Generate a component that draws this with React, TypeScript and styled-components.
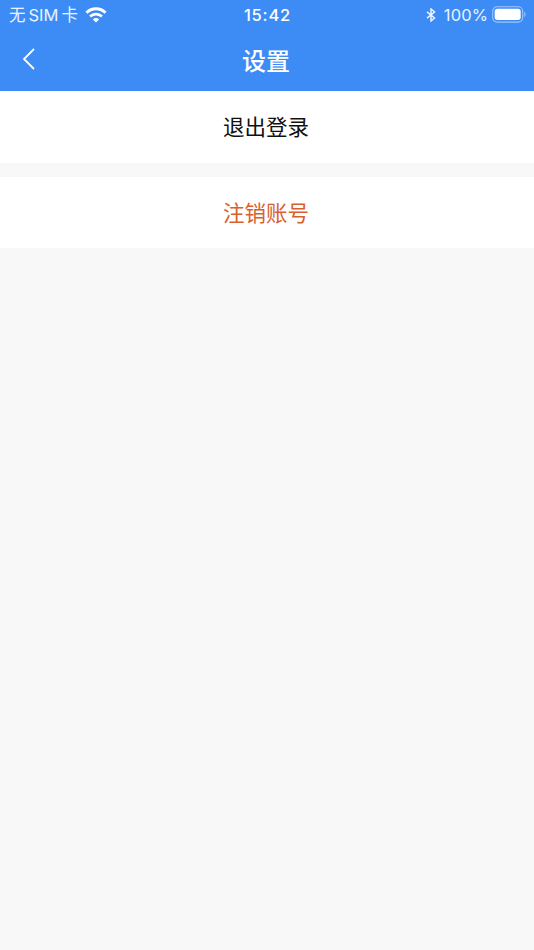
import React from 'react';
import styled, { createGlobalStyle } from 'styled-components';

const GlobalStyle = createGlobalStyle`
  * { box-sizing: border-box; }
  body {
    margin: 0;
    background: #f8f8f8;
    font-family: Inter, "Noto Sans CJK SC", sans-serif;
  }
`;

const Screen = styled.div`
  min-height: 950px;
  background: #f8f8f8;
`;

const Header = styled.header`
  height: 91px;
  background: #3d8cf5;
  color: #fff;
`;

const StatusBar = styled.div`
  display: grid;
  grid-template-columns: 1fr auto 1fr;
  align-items: center;
  height: 30px;
  padding: 0 8px 0 9px;
  color: #eaf3ff;
  font-size: 16.5px;
  line-height: 30px;
  white-space: nowrap;
`;

const Carrier = styled.div`
  display: flex;
  align-items: center;
  gap: 3px;

  svg { margin: -1px 0 0 4px; }
`;

const Clock = styled.div`
  color: #fff;
  font-size: 16.5px;
  font-weight: 500;
  letter-spacing: 0.8px;
`;

const Indicators = styled.div`
  display: flex;
  align-items: center;
  justify-content: flex-end;

  svg { margin-top: -2px; }
  svg:first-child { margin-top: 0; }
`;

const Percent = styled.span`
  margin: 0 4px 0 8px;
  letter-spacing: 0.1px;
`;

const NavBar = styled.nav`
  display: grid;
  grid-template-columns: 58px 1fr 58px;
  align-items: center;
  height: 60px;
`;

const BackButton = styled.button`
  display: flex;
  align-items: center;
  height: 60px;
  padding: 0 0 2px 22px;
  border: 0;
  background: none;
  color: #fff;
`;

const Title = styled.h1`
  margin: 0;
  padding: 3px 2px 0 0;
  font-size: 24px;
  font-weight: 500;
  line-height: 57px;
  text-align: center;
`;

const ActionList = styled.main`
  display: flex;
  flex-direction: column;
  gap: 14px;
`;

const Action = styled.button<{ $danger?: boolean }>`
  height: 71.5px;
  padding: 2px 2px 0 0;
  border: 0;
  background: #fff;
  color: ${({ $danger }) => ($danger ? '#d9602e' : '#111')};
  font-family: inherit;
  font-size: 21.5px;
  line-height: 69px;
  text-align: center;
`;

const WifiIcon = () => (
  <svg width="22" height="16" viewBox="0 0 22 16" fill="none" stroke="#fff" strokeWidth="3">
    <path d="M1.5 5.8a13.4 13.4 0 0 1 19 0" />
    <path d="M5.1 9.5a8.3 8.3 0 0 1 11.8 0" strokeWidth="2.7" />
    <path d="M11 15.5l-3.1-3.1a4.4 4.4 0 0 1 6.2 0z" fill="#fff" stroke="none" />
  </svg>
);

const BluetoothIcon = () => (
  <svg width="10" height="14" viewBox="0 0 10 14" fill="none" stroke="#eaf3ff" strokeWidth="1.5">
    <path d="M1 3.8l7.5 6.2L5 13V1l3.5 3L1 10.2" />
  </svg>
);

const BatteryIcon = () => (
  <svg width="34" height="17" viewBox="0 0 34 17">
    <rect x="0.7" y="0.7" width="30" height="15.4" rx="4.5" fill="none" stroke="#9dc6fb" strokeWidth="1.1" />
    <rect x="2.7" y="2.8" width="26" height="11.2" rx="2.7" fill="#fff" />
    <path d="M32 5.6q1.7 1 1.7 2.8T32 11.2z" fill="#84b7fa" />
  </svg>
);

const BackIcon = () => (
  <svg width="14" height="22" viewBox="0 0 14 22" fill="none" stroke="currentColor" strokeWidth="1.8">
    <path d="M12 1L2 11l10 10" />
  </svg>
);

export default function App() {
  return (
    <>
      <GlobalStyle />
      <Screen>
        <Header>
          <StatusBar>
            <Carrier>
              <span>无</span>
              <span>SIM</span>
              <span>卡</span>
              <WifiIcon />
            </Carrier>
            <Clock>15:42</Clock>
            <Indicators>
              <BluetoothIcon />
              <Percent>100%</Percent>
              <BatteryIcon />
            </Indicators>
          </StatusBar>
          <NavBar>
            <BackButton aria-label="返回">
              <BackIcon />
            </BackButton>
            <Title>设置</Title>
          </NavBar>
        </Header>
        <ActionList>
          <Action>退出登录</Action>
          <Action $danger>注销账号</Action>
        </ActionList>
      </Screen>
    </>
  );
}
